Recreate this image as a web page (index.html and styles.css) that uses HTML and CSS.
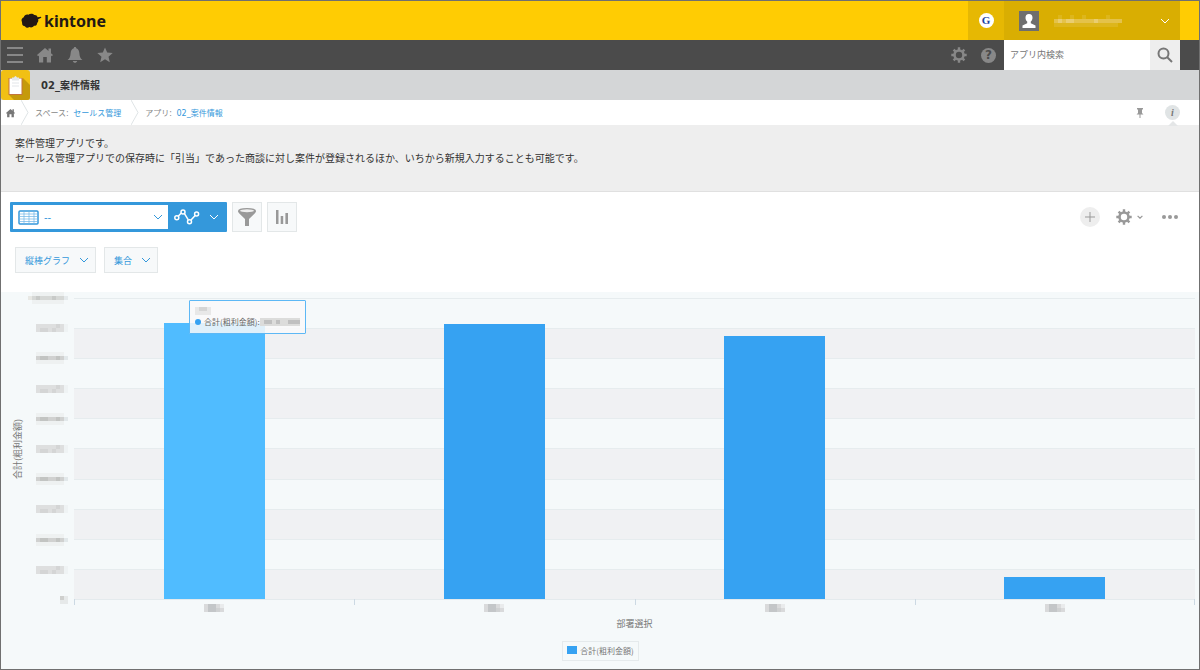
FILE: index.html
```html
<!DOCTYPE html>
<html lang="ja">
<head>
    <meta charset="UTF-8">
    <meta name="viewport" content="width=device-width, initial-scale=1.0">
    <title>02_案件情報 - kintone</title>
    <link rel="stylesheet" href="styles.css">
</head>
<body>

    <!-- Shared icons -->
    <svg class="symbols" aria-hidden="true">
        <symbol id="chevron" viewBox="0 0 10 6"><path d="M1 1l4 4 4-4" fill="none" stroke="currentColor"/></symbol>
        <symbol id="home" viewBox="0 0 16 16"><path d="M8 1L0 8l1.200 1.300L2 8.600V15.500h4.200V10h3.600v5.500H14V8.600l.8.700L16 8l-2-1.800V1.500h-2.500V4z" fill="currentColor"/></symbol>
        <symbol id="gear" viewBox="0 0 16 16">
            <g fill="none" stroke="currentColor">
                <circle cx="8" cy="8" r="4.500" stroke-width="2.600"/>
                <path d="M8 .3v3M8 12.700v3M.3 8h3M12.700 8h3M2.600 2.600l2 2M11.400 11.400l2 2M2.600 13.400l2-2M11.400 4.600l2-2" stroke-width="2.400"/>
            </g>
        </symbol>
        <!-- Masked numbers -->
        <symbol id="mask-a" viewBox="0 0 32 12">
            <path d="M0 0h28v12H0z" fill="#eef1f1"/><path d="M0 4h28v4H0z" fill="#d0d1d0"/><path d="M4 4h8v4H4zM20 4h4v4h-4z" fill="#c2c4c2"/><path d="M28 4h4v4h-4z" fill="#e2e8ea"/>
        </symbol>
        <symbol id="mask-b" viewBox="0 0 32 12">
            <path d="M0 2h28v8H0z" fill="#dedfdf"/><path d="M4 6h8v4H4zM16 6h4v4h-4zM20 2h4v4h-4z" fill="#d4d5d5"/><path d="M28 2h4v8h-4z" fill="#eff3f4"/>
        </symbol>
        <symbol id="mask-top" viewBox="0 0 40 12">
            <path d="M0 4h36v4H0z" fill="#d6d8d6"/><path d="M4 0h32v4H4zM4 8h32v4H4z" fill="#eef1f1"/><path d="M8 4h4v4H8zM24 4h4v4h-4z" fill="#c8cac8"/><path d="M36 4h4v4h-4z" fill="#e5eaec"/><path d="M0 4h4v4H0z" fill="#e8e8e4"/>
        </symbol>
        <symbol id="mask-zero" viewBox="0 0 8 8"><path d="M0 0h8v8H0z" fill="#e6e9e9"/><path d="M0 0h4v4H0z" fill="#cecfcd"/></symbol>
        <symbol id="mask-x" viewBox="0 0 20 8">
            <path d="M0 0h20v8H0z" fill="#d9dadb"/><path d="M4 0h8v8H4z" fill="#c3c6c8"/><path d="M12 4h4v4h-4z" fill="#cfd1d2"/><path d="M16 0h4v4h-4z" fill="#e9ebec"/>
        </symbol>
    </svg>

    <!-- Header -->
    <header class="header">
        <a href="#" class="logo">
            <svg width="21" height="16" viewBox="0 0 21 16" aria-hidden="true"><path d="M1 9c-1.200-2 0-4.300 1.800-4.800C3.500 2 5.500 1 7.300 1.800 9 .2 12 .3 13.300 2c1.600-.2 2.900.7 3.200 2.200L20 3.800l.3 1-3.200 1.400c.5 1.600.2 2.800-.9 3.700-.1 1.900-1.400 3-3.200 2.900-1 1.500-3 2-4.600 1.200C6.800 15.200 4.800 14.800 4 13.200 2.200 13.200.8 11.800 1.200 10.200 1 9.900 1 9.500 1 9z" fill="#231815"/></svg>
            <span>kintone</span>
        </a>
        <a href="#" class="header-service" aria-label="Garoon"><span class="garoon">G</span></a>
        <button class="user" aria-label="ユーザー">
            <svg width="20" height="20" viewBox="0 0 20 20"><path d="M0 0h20v20H0z" fill="#6e6e6e"/><path d="M10 3c2.500 0 3.500 1.600 3.500 3.700 0 1.800-.8 3-1.700 3.900v1.700l4.700 2.200V17h-13v-2.500l4.700-2.200v-1.700C7.300 9.700 6.500 8.500 6.500 6.700 6.500 4.600 7.500 3 10 3z" fill="#fff"/></svg>
            <svg class="user-name" width="68" height="12" viewBox="0 0 68 12"><path d="M0 4h68v4H0z" fill="#e4c24a"/><path d="M4 0h4v4H4zM16 0h4v4h-4zM28 0h4v4h-4zM52 0h4v4h-4zM0 8h64v4H0z" fill="#ddb61c"/><path d="M4 4h4v4H4zM12 4h8v4h-8zM40 4h4v4h-4z" fill="#e9cd70"/></svg>
            <svg width="10" height="6"><use href="#chevron"/></svg>
        </button>
    </header>

    <!-- Global navigation -->
    <nav class="global-nav">
        <a href="#" aria-label="メニュー"><svg width="16" height="16" viewBox="0 0 16 16"><path d="M0 1h16M0 8h16M0 15h16" stroke="currentColor" stroke-width="2"/></svg></a>
        <a href="#" aria-label="ポータル"><svg width="16" height="16"><use href="#home"/></svg></a>
        <a href="#" aria-label="通知"><svg width="16" height="16" viewBox="0 0 16 16"><path d="M8 0c.8 0 1.200.5 1.200 1.300C11.500 2 12.200 4 12.400 6.500c.2 3 .9 4.700 3 6.500H.6c2.100-1.800 2.800-3.500 3-6.500C3.800 4 4.500 2 6.800 1.300 6.800.5 7.200 0 8 0zM5.800 14h4.400c-.3 1.200-1.100 1.800-2.200 1.800S6.100 15.200 5.800 14z" fill="currentColor"/></svg></a>
        <a href="#" aria-label="お気に入り"><svg width="16" height="16" viewBox="0 0 16 16"><path d="M8 .5l2.200 5.100 5.500.5-4.200 3.600 1.300 5.500L8 12.300l-4.800 2.900 1.300-5.500L.3 6.100l5.500-.5z" fill="currentColor"/></svg></a>
        <a href="#" class="nav-settings" aria-label="設定"><svg width="16" height="16"><use href="#gear"/></svg></a>
        <a href="#" aria-label="ヘルプ"><span class="help">?</span></a>
        <form class="search">
            <input type="text" placeholder="アプリ内検索" aria-label="アプリ内検索">
            <button type="button" aria-label="検索"><svg width="16" height="16" viewBox="0 0 16 16"><g fill="none" stroke="currentColor" stroke-width="2"><circle cx="6.500" cy="6.500" r="5"/><path d="M10 10l5 5"/></g></svg></button>
        </form>
    </nav>

    <!-- App title -->
    <div class="app-title">
        <svg width="30" height="30" viewBox="0 0 30 30" aria-hidden="true">
            <rect width="29" height="30" rx="3" fill="#f1c015"/>
            <path d="M22 8l7 7v12q0 3-3 3H13l-5-5z" fill="#c59a0c"/>
            <path d="M7.500 8h14v17h-14z" fill="#c4743c"/><path d="M8.500 8.500h12V24h-12z" fill="#fff"/>
            <path d="M11 7.500h2q1.500-3 3 0h2v3h-7z" fill="#e4e7ea"/><path d="M11 13h7M11 16h7" stroke="#e3e6e9"/>
        </svg>
        <h1>02_案件情報</h1>
    </div>

    <!-- Breadcrumb -->
    <div class="breadcrumb">
        <a href="#" class="crumb-home" aria-label="ポータル"><svg width="9" height="10"><use href="#home"/></svg></a>
        <svg width="8" height="25" viewBox="0 0 8 25"><path d="M0 0l7 12.500L0 25" fill="none" stroke="#dfe4e6"/></svg>
        <span>スペース: <a href="#">セールス管理</a></span>
        <svg width="8" height="25" viewBox="0 0 8 25"><path d="M0 0l7 12.500L0 25" fill="none" stroke="#dfe4e6"/></svg>
        <span>アプリ: <a href="#">02_案件情報</a></span>
        <button class="pin" aria-label="固定"><svg width="8" height="10" viewBox="0 0 8 10"><path d="M1 0h6v1.500H6V5l1.500 1.500H4.500V10h-1V6.500H.5L2 5V1.500H1z" fill="#999"/></svg></button>
        <button class="info" aria-label="アプリの説明">i</button>
    </div>

    <div class="description">
        <p>案件管理アプリです。</p>
        <p>セールス管理アプリでの保存時に「引当」であった商談に対し案件が登録されるほか、いちから新規入力することも可能です。</p>
    </div>

    <!-- Toolbar -->
    <div class="toolbar">
        <div class="view-box">
            <div class="view-select">
                <svg width="21" height="15" viewBox="0 0 21 15"><rect x="1" y="1" width="19" height="13" rx="1" fill="#fff" stroke="#3498db" stroke-width="1.500"/><path d="M1 4h19M1 6.500h19M1 9h19M1 11.500h19M6 1v13M11 1v13M16 1v13" stroke="#6db5e6" stroke-width=".7"/></svg>
                <select aria-label="一覧"><option>--</option></select>
                <svg width="10" height="6"><use href="#chevron"/></svg>
            </div>
            <button class="graph-button" aria-label="グラフ">
                <svg width="26" height="16" viewBox="0 0 26 16"><g fill="none" stroke="#fff" stroke-width="1.500"><path d="M4.200 7.200L7.300 4M10.300 4.300l4 6.500M17 11l4.200-4.500"/><circle cx="2.800" cy="8.800" r="2"/><circle cx="9" cy="3" r="2"/><circle cx="15.500" cy="12.700" r="2"/><circle cx="22.600" cy="5" r="2"/></g></svg>
                <svg width="10" height="6"><use href="#chevron"/></svg>
            </button>
        </div>
        <button class="square-button" aria-label="絞り込み"><svg width="18" height="18" viewBox="0 0 18 18"><path d="M0 3q0-3 9-3t9 3c0 1-.5 1.600-1.300 2.400L11 11v7H7v-7L1.300 5.400C.5 4.600 0 4 0 3z" fill="#999"/><ellipse cx="9" cy="2.800" rx="7" ry="1.500" fill="#eee"/></svg></button>
        <button class="square-button" aria-label="集計"><svg width="12" height="14" viewBox="0 0 12 14"><path d="M0 0h2.500v14H0zM4.700 6h2.500v8H4.700zM9.400 3H12v11H9.400z" fill="#999"/></svg></button>
        <button class="add-button" aria-label="追加"><svg width="12" height="12" viewBox="0 0 12 12"><path d="M6 1v10M1 6h10" stroke="#999"/></svg></button>
        <button class="gear-button" aria-label="アプリの設定"><svg width="16" height="16"><use href="#gear"/></svg><svg width="6" height="4"><use href="#chevron" stroke-width="2"/></svg></button>
        <button class="more-button" aria-label="その他"><svg width="16" height="4" viewBox="0 0 16 4"><g fill="#999"><circle cx="2" cy="2" r="2"/><circle cx="8" cy="2" r="2"/><circle cx="14" cy="2" r="2"/></g></svg></button>
    </div>

    <div class="chart-options">
        <div class="option">
            <select aria-label="グラフの種類"><option>縦棒グラフ</option></select>
            <svg width="10" height="6"><use href="#chevron"/></svg>
        </div>
        <div class="option">
            <select aria-label="表示方法"><option>集合</option></select>
            <svg width="10" height="6"><use href="#chevron"/></svg>
        </div>
    </div>

    <!-- Chart -->
    <main class="chart">
        <div class="y-title">合計(粗利金額)</div>
        <div class="y-labels">
            <svg width="40" height="12"><use href="#mask-top"/></svg>
            <svg width="32" height="12"><use href="#mask-b"/></svg>
            <svg width="32" height="12"><use href="#mask-a"/></svg>
            <svg width="32" height="12"><use href="#mask-b"/></svg>
            <svg width="32" height="12"><use href="#mask-a"/></svg>
            <svg width="32" height="12"><use href="#mask-b"/></svg>
            <svg width="32" height="12"><use href="#mask-a"/></svg>
            <svg width="32" height="12"><use href="#mask-b"/></svg>
            <svg width="32" height="12"><use href="#mask-a"/></svg>
            <svg width="32" height="12"><use href="#mask-b"/></svg>
            <svg width="8" height="12"><use href="#mask-zero"/></svg>
        </div>
        <div class="plot">
            <div class="bands">
                <div></div><div></div><div></div><div></div><div></div>
                <div></div><div></div><div></div><div></div><div></div>
            </div>
            <div class="bars">
                <div class="column"><div class="bar active" style="height: 91.7%"></div></div>
                <div class="column"><div class="bar" style="height: 91.4%"></div></div>
                <div class="column"><div class="bar" style="height: 87.3%"></div></div>
                <div class="column"><div class="bar" style="height: 7.4%"></div></div>
            </div>
            <div class="tooltip">
                <svg width="16" height="8" viewBox="0 0 16 8"><path d="M0 0h16v8H0z" fill="#e8e8e8"/><path d="M4 0h8v4H4z" fill="#d5d5d5"/></svg>
                <div class="tooltip-row">
                    <span class="dot"></span>
                    <span>合計(粗利金額):</span>
                    <svg width="40" height="8" viewBox="0 0 40 8"><path d="M0 0h40v8H0z" fill="#dcdcdb"/><path d="M4 2h8v4H4zM16 2h4v4h-4zM28 2h12v4H28z" fill="#c0c0c0"/></svg>
                </div>
            </div>
        </div>
        <div class="x-labels">
            <svg width="20" height="8"><use href="#mask-x"/></svg>
            <svg width="20" height="8"><use href="#mask-x"/></svg>
            <svg width="20" height="8"><use href="#mask-x"/></svg>
            <svg width="20" height="8"><use href="#mask-x"/></svg>
        </div>
        <div class="x-title">部署選択</div>
        <div class="legend"><span class="swatch"></span>合計(粗利金額)</div>
    </main>

</body>
</html>
```
FILE: styles.css
```css
* {
    box-sizing: border-box;
}

body {
    display: flex;
    flex-direction: column;
    min-height: 100vh;
    margin: 0;
    border: 1px solid #707070;
    background-color: #fff;
    color: #333;
    font-family: "DejaVu Sans", "Noto Sans CJK JP", sans-serif;
    font-size: 10px;
}

a {
    color: #3498db;
    text-decoration: none;
}

button, input, select {
    margin: 0;
    padding: 0;
    border: none;
    border-radius: 0;
    background: none;
    color: inherit;
    font-family: "Noto Sans CJK JP", sans-serif;
    font-size: 9px;
}

select {
    appearance: none;
}

button {
    display: flex;
    align-items: center;
    justify-content: center;
    cursor: pointer;
}

svg {
    display: block;
    flex: none;
}

.symbols {
    position: absolute;
    width: 0;
    height: 0;
}

/* Header */
.header {
    display: flex;
    height: 39px;
    padding-right: 19px;
    background-color: #ffcc03;
}

.logo {
    display: flex;
    align-items: center;
    gap: 2px;
    margin-right: auto;
    padding-left: 20px;
    color: #231815;
    font-family: "Noto Sans", sans-serif;
    font-size: 16px;
    font-weight: bold;
}

.header-service {
    display: flex;
    align-items: center;
    justify-content: center;
    width: 36px;
    background-color: #e6b803;
}

.garoon {
    width: 15px;
    height: 15px;
    border-radius: 50%;
    background-color: #fff;
    color: #1c3f9e;
    font-family: "Liberation Serif", serif;
    font-size: 11px;
    font-weight: bold;
    line-height: 14px;
    text-align: center;
}

.user {
    width: 176px;
    padding: 0 10px 0 15px;
    background-color: #d9ae02;
    color: #fff;
}

.user-name {
    margin: 0 auto 0 15px;
}

/* Global navigation */
.global-nav {
    display: flex;
    align-items: center;
    height: 30px;
    padding: 0 19px 0 6px;
    background-color: #4b4b4b;
}

.global-nav a {
    width: 30px;
    color: #888;
}

.global-nav .nav-settings {
    margin-left: auto;
}

.help {
    display: block;
    width: 15px;
    height: 15px;
    border-radius: 50%;
    background-color: #888;
    color: #4b4b4b;
    font-size: 12px;
    font-weight: bold;
    line-height: 15px;
    text-align: center;
}

.search {
    display: flex;
    width: 176px;
    height: 30px;
    margin-left: -7px;
}

.search input {
    flex: 1;
    min-width: 0;
    padding: 0 6px 2px;
    background-color: #fff;
}

.search input::placeholder {
    color: #757575;
}

.search button {
    width: 30px;
    background-color: #eee;
    color: #777;
}

/* App title */
.app-title {
    display: flex;
    align-items: center;
    gap: 10px;
    height: 30px;
    background-color: #d4d6d7;
}

.app-title h1 {
    margin: 0;
    padding-bottom: 2px;
    font-size: 10px;
}

/* Breadcrumb */
.breadcrumb {
    display: flex;
    align-items: center;
    height: 25px;
    padding: 0 19px 0 5px;
    color: #888;
    font-size: 8px;
}

.breadcrumb span {
    margin: 0 10px 0 6px;
    white-space: nowrap;
}

.breadcrumb span a {
    margin-left: 2px;
}

.crumb-home {
    margin-right: 6px;
    color: #777;
}

.pin {
    margin-left: auto;
}

.info {
    position: relative;
    width: 15px;
    height: 15px;
    margin-left: 21px;
    border-radius: 50%;
    background-color: #e0e4e5;
    color: #777;
    font-family: "Liberation Serif", serif;
    font-size: 10px;
    font-style: italic;
    font-weight: bold;
}

.info::after {
    content: "";
    position: absolute;
    top: 16px;
    left: 3px;
    border: 5px solid transparent;
    border-top-width: 0;
    border-bottom-color: #e4e6e7;
}

.description {
    height: 67px;
    padding: 11px 14px;
    border-bottom: 1px solid #e0e0e0;
    background-color: #eee;
    line-height: 15px;
}

.description p {
    margin: 0;
}

/* Toolbar */
.toolbar {
    display: flex;
    align-items: center;
    gap: 5px;
    padding: 10px 21px 0 9px;
    color: #999;
}

.view-box {
    display: flex;
    width: 217px;
    height: 30px;
    padding: 3px 0 3px 3px;
    border-radius: 1px;
    background-color: #3498db;
}

.view-select {
    display: flex;
    align-items: center;
    gap: 5px;
    flex: 1;
    padding: 0 5px;
    background-color: #fff;
    color: #3498db;
}

.view-select select {
    flex: 1;
    min-width: 0;
    font-family: "DejaVu Sans", sans-serif;
    font-size: 10px;
}

.graph-button {
    gap: 9px;
    width: 59px;
    padding-right: 3px;
    color: #fff;
}

.square-button {
    width: 30px;
    height: 30px;
    border: 1px solid #e3e7e8;
    background-color: #f7f9fa;
}

.add-button {
    width: 20px;
    height: 20px;
    margin-left: auto;
    border-radius: 50%;
    background-color: #eee;
}

.gear-button {
    gap: 5px;
    margin-left: 11px;
}

.more-button {
    margin-left: 14px;
}

.chart-options {
    display: flex;
    gap: 8px;
    padding: 15px 14px 19px;
    color: #3498db;
}

.option {
    display: flex;
    align-items: center;
    gap: 8px;
    height: 26px;
    padding: 0 6px 0 9px;
    border: 1px solid #e3e7e8;
    background-color: #f7f9fa;
}

/* Chart */
.chart {
    display: grid;
    flex: 1;
    grid-template-columns: 32px 41px 1fr;
    grid-template-rows: 1fr auto auto auto;
    padding: 0 4px 8px 0;
    background-color: #f5f9fa;
    color: #777;
}

.y-title {
    align-self: center;
    justify-self: center;
    padding-bottom: 6px;
    font-family: "Noto Sans CJK JP", sans-serif;
    font-size: 9px;
    text-orientation: sideways;
    transform: rotate(180deg);
    writing-mode: vertical-rl;
}

.y-labels {
    display: flex;
    flex-direction: column;
    align-items: flex-end;
    justify-content: space-between;
    margin-bottom: -6px;
    padding-right: 6px;
}

.plot {
    position: relative;
    display: grid;
    margin-top: 6px;
    border-bottom: 1px solid #e4eaed;
}

.bands, .bars {
    grid-area: 1 / 1;
}

.bands {
    display: flex;
    flex-direction: column;
}

.bands div {
    flex: 1;
    border-top: 1px solid #e6ecee;
}

.bands div:nth-child(even) {
    background-color: #f0f1f3;
}

.bars {
    display: grid;
    grid-template-columns: repeat(4, 1fr);
}

.column {
    position: relative;
    display: flex;
    align-items: flex-end;
    justify-content: center;
}

/* Ticks below the axis */
.column::before, .column:last-child::after {
    content: "";
    position: absolute;
    top: 100%;
    left: 0;
    width: 1px;
    height: 6px;
    background-color: #ccd9e3;
}

.column:last-child::after {
    right: 0;
    left: auto;
}

.bar {
    width: 36%;
    background-color: #36a2f2;
}

.bar.active {
    background-color: #50bcff;
}

.tooltip {
    position: absolute;
    top: 2px;
    left: 115px;
    display: flex;
    flex-direction: column;
    gap: 1px;
    height: 34px;
    padding: 6px 5px 0;
    border: 1px solid #5db8f5;
    border-radius: 1px;
    background-color: rgba(249, 249, 249, 0.85);
    color: #666;
    font-family: "Noto Sans CJK JP", sans-serif;
    font-size: 8px;
    line-height: 12px;
}

.tooltip-row {
    display: flex;
    align-items: center;
    white-space: nowrap;
}

.dot {
    width: 6px;
    height: 6px;
    margin-right: 3px;
    border-radius: 50%;
    background-color: #36a2f2;
}

.x-labels {
    display: grid;
    grid-column: 3;
    grid-template-columns: repeat(4, 1fr);
    justify-items: center;
    padding: 4px 0 5px;
}

.x-title {
    grid-column: 3;
    font-size: 9px;
    line-height: 15px;
    text-align: center;
}

.legend {
    display: flex;
    align-items: center;
    grid-column: 3;
    justify-self: center;
    gap: 3px;
    height: 20px;
    margin-top: 9px;
    margin-right: 68px;
    padding: 0 4px 2px;
    border: 1px solid #e5eaec;
    font-family: "Noto Sans CJK JP", sans-serif;
    font-size: 8px;
}

.swatch {
    width: 10px;
    height: 8px;
    background-color: #36a2f2;
}
```
